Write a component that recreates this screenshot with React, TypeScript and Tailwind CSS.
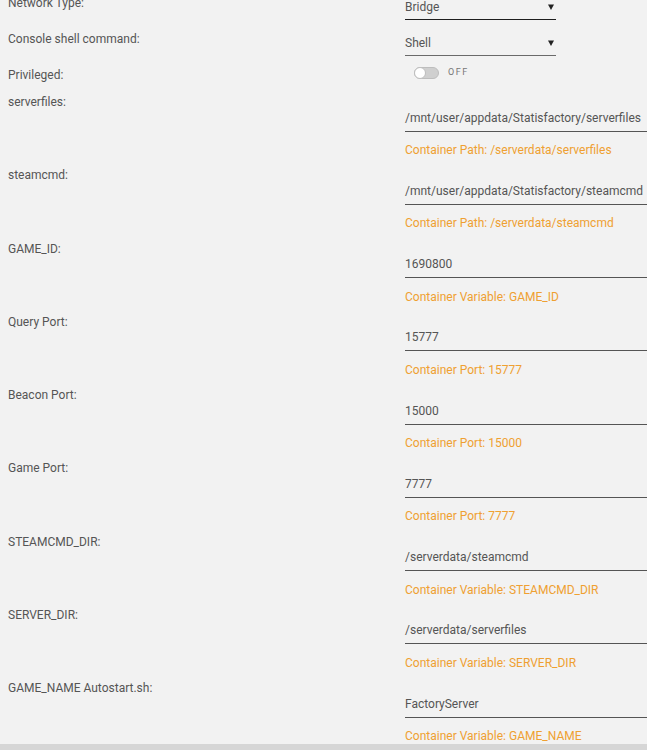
import React from 'react';

interface Field {
  label: string;
  value: string;
  help: string;
}

const fields: Field[] = [
  { label: 'serverfiles:', value: '/mnt/user/appdata/Statisfactory/serverfiles', help: 'Container Path: /serverdata/serverfiles' },
  { label: 'steamcmd:', value: '/mnt/user/appdata/Statisfactory/steamcmd', help: 'Container Path: /serverdata/steamcmd' },
  { label: 'GAME_ID:', value: '1690800', help: 'Container Variable: GAME_ID' },
  { label: 'Query Port:', value: '15777', help: 'Container Port: 15777' },
  { label: 'Beacon Port:', value: '15000', help: 'Container Port: 15000' },
  { label: 'Game Port:', value: '7777', help: 'Container Port: 7777' },
  { label: 'STEAMCMD_DIR:', value: '/serverdata/steamcmd', help: 'Container Variable: STEAMCMD_DIR' },
  { label: 'SERVER_DIR:', value: '/serverdata/serverfiles', help: 'Container Variable: SERVER_DIR' },
  { label: 'GAME_NAME Autostart.sh:', value: 'FactoryServer', help: 'Container Variable: GAME_NAME' },
];

const Caret = () => (
  <svg width="6" height="6" viewBox="0 0 6 6" className="mr-[2px]">
    <path d="M0 0.5 H6 L3 6 Z" fill="#222" />
  </svg>
);

const SelectRow = ({ label, value, line }: { label: string; value: string; line: string }) => (
  <div className="flex h-[36px] shrink-0">
    <div className="w-[405px] shrink-0 pl-2 leading-4">{label}</div>
    <div className="w-[151px]">
      <div className={`flex items-center justify-between pt-[4px] pb-[4px] leading-4 border-b ${line}`}>
        <span>{value}</span>
        <Caret />
      </div>
    </div>
  </div>
);

export default function App() {
  return (
    <div
      className="w-full h-[750px] overflow-hidden bg-[#f2f2f2] text-[12px] text-[#555] flex flex-col"
      style={{ fontFamily: 'Roboto, "Liberation Sans", sans-serif' }}
    >
      <div className="-mt-[5px] flex flex-col">
        <SelectRow label="Network Type:" value="Bridge" line="border-[#1e1e1e]" />
        <SelectRow label="Console shell command:" value="Shell" line="border-[#6a6a6a]" />

        <div className="flex h-[27px] shrink-0">
          <div className="w-[405px] shrink-0 pl-2 leading-4">Privileged:</div>
          <div className="flex items-center h-3 pl-[9px] gap-[9px]">
            <div className="relative w-[25px] h-3 rounded-full bg-[#cfcfcf] border border-[#bdbdbd]">
              <div className="absolute -left-px -top-px w-3 h-3 rounded-full bg-white border border-[#bdbdbd]" />
            </div>
            <span className="text-[9px] tracking-[1.5px] text-[#777]">OFF</span>
          </div>
        </div>

        {fields.map((f, i) => (
          <div key={f.label} className={`flex shrink-0 ${i < fields.length - 1 ? 'h-[73.25px]' : ''}`}>
            <div className="w-[405px] shrink-0 pl-2 leading-4">{f.label}</div>
            <div className="flex-1 min-w-0">
              <div className="pt-[15.5px] pb-[5px] leading-4 border-b border-[#555] whitespace-nowrap">{f.value}</div>
              <div className="mt-[10.5px] leading-4 text-[#efa031] whitespace-nowrap">{f.help}</div>
            </div>
          </div>
        ))}
      </div>
      <div className="flex-1 bg-[#d6d6d6]" />
    </div>
  );
}
